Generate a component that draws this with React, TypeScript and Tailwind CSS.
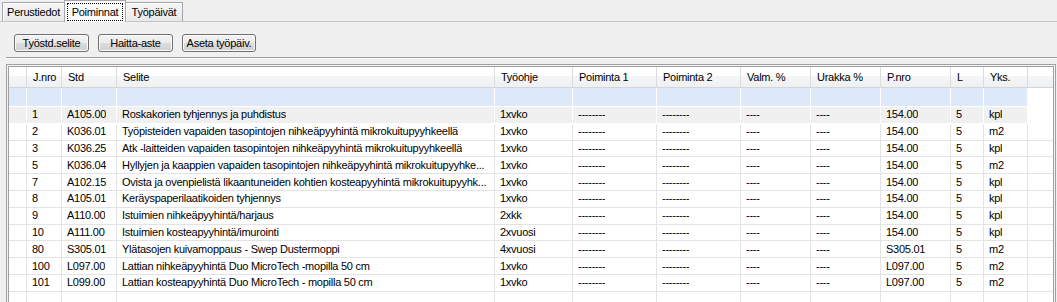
import React from "react";

const colW = [
  "w-[35px]",
  "w-[55px]",
  "w-[378px]",
  "w-[78px]",
  "w-[84px]",
  "w-[84px]",
  "w-[70px]",
  "w-[70px]",
  "w-[70px]",
  "w-[33px]",
  "w-[44px]",
];

const headers = ["J.nro", "Std", "Selite", "Työohje", "Poiminta 1", "Poiminta 2", "Valm. %", "Urakka %", "P.nro", "L", "Yks."];

const P = "--------";
const V = "----";

const rows: string[][] = [
  ["1", "A105.00", "Roskakorien tyhjennys ja puhdistus", "1xvko", P, P, V, V, "154.00", "5", "kpl"],
  ["2", "K036.01", "Työpisteiden vapaiden tasopintojen nihkeäpyyhintä mikrokuitupyyhkeellä", "1xvko", P, P, V, V, "154.00", "5", "m2"],
  ["3", "K036.25", "Atk -laitteiden vapaiden tasopintojen nihkeäpyyhintä mikrokuitupyyhkeellä", "1xvko", P, P, V, V, "154.00", "5", "kpl"],
  ["5", "K036.04", "Hyllyjen ja kaappien vapaiden tasopintojen nihkeäpyyhintä mikrokuitupyyhke...", "1xvko", P, P, V, V, "154.00", "5", "m2"],
  ["7", "A102.15", "Ovista ja ovenpielistä likaantuneiden kohtien kosteapyyhintä mikrokuitupyyhk...", "1xvko", P, P, V, V, "154.00", "5", "kpl"],
  ["8", "A105.01", "Keräyspaperilaatikoiden tyhjennys", "1xvko", P, P, V, V, "154.00", "5", "kpl"],
  ["9", "A110.00", "Istuimien nihkeäpyyhintä/harjaus", "2xkk", P, P, V, V, "154.00", "5", "kpl"],
  ["10", "A111.00", "Istuimien kosteapyyhintä/imurointi", "2xvuosi", P, P, V, V, "154.00", "5", "kpl"],
  ["80", "S305.01", "Ylätasojen kuivamoppaus - Swep Dustermoppi", "4xvuosi", P, P, V, V, "S305.01", "5", "m2"],
  ["100", "L097.00", "Lattian nihkeäpyyhintä Duo MicroTech -mopilla 50 cm", "1xvko", P, P, V, V, "L097.00", "5", "m2"],
  ["101", "L099.00", "Lattian kosteapyyhintä Duo MicroTech - mopilla 50 cm", "1xvko", P, P, V, V, "L097.00", "5", "m2"],
];

const headBg = "bg-[linear-gradient(#ffffff_0%,#ffffff_45%,#f4f5f7_46%,#eef0f2_100%)]";

function GridRow({ cells, kind }: { cells: string[]; kind: "blue" | "sel" | "plain" }) {
  const bg = kind === "blue" ? "bg-[#dde8fb]" : kind === "sel" ? "bg-[#f0f0f0]" : "bg-white";
  const line = kind === "plain" ? "border-[#e3e3e3]" : "border-white";
  const h = kind === "blue" ? "h-[19px]" : "h-[16.8px]";
  return (
    <div className={`flex ${h} shrink-0`}>
      <div className={`w-[18px] shrink-0 border-r border-b ${line} ${bg}`} />
      {colW.map((w, i) => (
        <div
          key={i}
          className={`${w} shrink-0 flex items-center overflow-hidden whitespace-nowrap border-r border-b pl-[5px] pr-[3px] ${line} ${bg}`}
        >
          <span className="truncate">{cells[i] ?? ""}</span>
        </div>
      ))}
      <div className={`flex-1 border-b ${kind === "plain" ? "border-[#e3e3e3]" : "border-white"} bg-white`} />
    </div>
  );
}

export default function App() {
  return (
    <div className="w-[1057px] h-[302px] overflow-hidden bg-[#f0f0f0] text-[11px] tracking-[-0.25px] text-black font-['Liberation_Sans',Arial,sans-serif] leading-none">
      {/* tabs */}
      <div className="flex h-[22px] items-end border-b border-[#c3c5ca] pl-[2px]">
        <div className="flex h-[19px] w-[63px] items-center justify-center border border-b-0 border-[#a3a6ad] bg-[linear-gradient(#f6f6f6,#e8e8e8)] shadow-[inset_1px_1px_0_#ffffff]">
          Perustiedot
        </div>
        <div className="relative z-10 -mb-px -ml-px flex h-[22px] w-[62px] border border-b-0 border-[#a3a6ad] bg-[#fbfbfb] p-[2px] pb-[1px]">
          <div className="flex flex-1 items-center justify-center border border-dotted border-black">Poiminnat</div>
        </div>
        <div className="-ml-px flex h-[19px] w-[58px] items-center justify-center border border-b-0 border-[#a3a6ad] bg-[linear-gradient(#f6f6f6,#e8e8e8)] shadow-[inset_1px_1px_0_#ffffff]">
          Työpäivät
        </div>
      </div>

      {/* buttons */}
      <div className="mt-[12px] flex gap-[9px] pl-[14px]">
        {[
          ["Työstd.selite", "w-[75px]"],
          ["Haitta-aste", "w-[75px]"],
          ["Aseta työpäiv.", "w-[74px]"],
        ].map(([t, w]) => (
          <div
            key={t}
            className={`${w} flex h-[18px] items-center justify-center rounded-[3px] border border-[#707070] bg-[linear-gradient(#f3f3f3_0%,#ebebeb_50%,#dddddd_51%,#d0d0d0_100%)] shadow-[inset_0_0_0_1px_#fbfbfb]`}
          >
            {t}
          </div>
        ))}
      </div>

      {/* separator */}
      <div className="ml-[6px] mt-[5px] border-t border-b border-t-[#a0a0a0] border-b-white" />

      {/* grid */}
      <div className="ml-[6px] mt-[5px] w-[1050px] border border-[#a0a0a0] bg-[#f4f4f4] p-px">
        <div className="flex h-[260px] flex-col overflow-hidden border border-[#a0a0a0] bg-white">
          <div className={`flex h-[21px] shrink-0 border-b border-[#d5d5d5] ${headBg}`}>
            <div className="w-[18px] shrink-0 border-r border-[#dcdcdc]" />
            {colW.map((w, i) => (
              <div key={i} className={`${w} shrink-0 flex items-center whitespace-nowrap border-r border-[#dcdcdc] pl-[6px]`}>
                {headers[i]}
              </div>
            ))}
            <div className="flex-1" />
          </div>
          <GridRow cells={[]} kind="blue" />
          {rows.map((r, i) => (
            <GridRow key={r[0]} cells={r} kind={i === 0 ? "sel" : "plain"} />
          ))}
          <GridRow cells={[]} kind="plain" />
        </div>
      </div>
    </div>
  );
}
